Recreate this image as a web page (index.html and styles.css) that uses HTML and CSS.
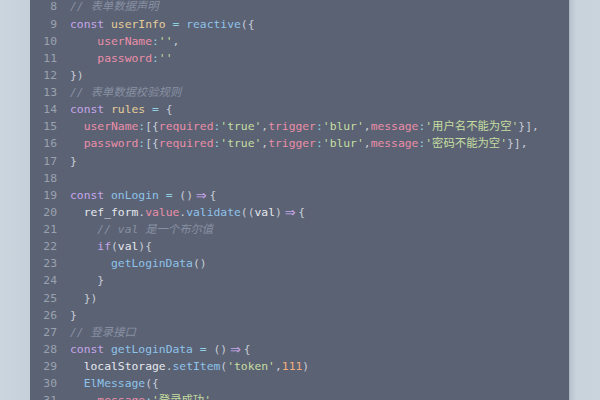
FILE: index.html
```html
<!DOCTYPE html>
<html lang="zh">
<head>
<meta charset="utf-8">
<link rel="stylesheet" href="styles.css">
</head>
<body>
<div class="panel">
  <div class="code">
    <div class="row"><span class="n">8</span><span class="c"><span class="cm">// 表单数据声明</span></span></div>
    <div class="row"><span class="n">9</span><span class="c"><span class="kw">const</span> <span class="var">userInfo</span> <span class="op">=</span> <span class="fn">reactive</span><span class="p">({</span></span></div>
    <div class="row"><span class="n">10</span><span class="c">    <span class="prop">userName</span><span class="op">:</span><span class="str">''</span><span class="p">,</span></span></div>
    <div class="row"><span class="n">11</span><span class="c">    <span class="prop">password</span><span class="op">:</span><span class="str">''</span></span></div>
    <div class="row"><span class="n">12</span><span class="c"><span class="p">})</span></span></div>
    <div class="row"><span class="n">13</span><span class="c"><span class="cm">// 表单数据校验规则</span></span></div>
    <div class="row"><span class="n">14</span><span class="c"><span class="kw">const</span> <span class="var">rules</span> <span class="op">=</span> <span class="p">{</span></span></div>
    <div class="row"><span class="n">15</span><span class="c">  <span class="prop">userName</span><span class="op">:</span><span class="p">[{</span><span class="prop">required</span><span class="op">:</span><span class="str">'true'</span><span class="p">,</span><span class="prop">trigger</span><span class="op">:</span><span class="str">'blur'</span><span class="p">,</span><span class="prop">message</span><span class="op">:</span><span class="str">'用户名不能为空'</span><span class="p">}],</span></span></div>
    <div class="row"><span class="n">16</span><span class="c">  <span class="prop">password</span><span class="op">:</span><span class="p">[{</span><span class="prop">required</span><span class="op">:</span><span class="str">'true'</span><span class="p">,</span><span class="prop">trigger</span><span class="op">:</span><span class="str">'blur'</span><span class="p">,</span><span class="prop">message</span><span class="op">:</span><span class="str">'密码不能为空'</span><span class="p">}],</span></span></div>
    <div class="row"><span class="n">17</span><span class="c"><span class="p">}</span></span></div>
    <div class="row"><span class="n">18</span><span class="c"></span></div>
    <div class="row"><span class="n">19</span><span class="c"><span class="kw">const</span> <span class="fn">onLogin</span> <span class="op">=</span> <span class="p">()</span><span class="arrow">⇒</span><span class="p">{</span></span></div>
    <div class="row"><span class="n">20</span><span class="c">  <span class="pl">ref_form</span><span class="p">.</span><span class="prop">value</span><span class="p">.</span><span class="fn">validate</span><span class="p">((</span><span class="pl">val</span><span class="p">)</span><span class="arrow">⇒</span><span class="p">{</span></span></div>
    <div class="row"><span class="n">21</span><span class="c">    <span class="cm">// val 是一个布尔值</span></span></div>
    <div class="row"><span class="n">22</span><span class="c">    <span class="kw">if</span><span class="p">(</span><span class="pl">val</span><span class="p">){</span></span></div>
    <div class="row"><span class="n">23</span><span class="c">      <span class="fn">getLoginData</span><span class="p">()</span></span></div>
    <div class="row"><span class="n">24</span><span class="c">    <span class="p">}</span></span></div>
    <div class="row"><span class="n">25</span><span class="c">  <span class="p">})</span></span></div>
    <div class="row"><span class="n">26</span><span class="c"><span class="p">}</span></span></div>
    <div class="row"><span class="n">27</span><span class="c"><span class="cm">// 登录接口</span></span></div>
    <div class="row"><span class="n">28</span><span class="c"><span class="kw">const</span> <span class="fn">getLoginData</span> <span class="op">=</span> <span class="p">()</span><span class="arrow">⇒</span><span class="p">{</span></span></div>
    <div class="row"><span class="n">29</span><span class="c">  <span class="pl">localStorage</span><span class="p">.</span><span class="fn">setItem</span><span class="p">(</span><span class="str">'token'</span><span class="p">,</span><span class="num">111</span><span class="p">)</span></span></div>
    <div class="row"><span class="n">30</span><span class="c">  <span class="fn">ElMessage</span><span class="p">({</span></span></div>
    <div class="row"><span class="n">31</span><span class="c">    <span class="prop">message</span><span class="op">:</span><span class="str">'登录成功'</span><span class="p">,</span></span></div>
  </div>
</div>
</body>
</html>
```
FILE: styles.css
```css
html, body {
  margin: 0;
  padding: 0;
  width: 600px;
  height: 400px;
  overflow: hidden;
}
body {
  background: linear-gradient(90deg, #cbd5de 0%, #c6d0da 5%, #c6d0da 94%, #b8c2cd 95%, #c7d2db 96%, #cad4dd 100%);
  display: flex;
}
.panel {
  margin-left: 30px;
  width: 539px;
  height: 400px;
  background: #5b6274;
  box-shadow: 1px 0 0 #a9b3bf, 2px 0 0 #bcc6d0;
  overflow: hidden;
}
.code {
  margin-top: -1.6px;
  font-family: "DejaVu Sans Mono", "Noto Sans CJK SC", monospace;
  font-size: 11.35px;
}
.row {
  display: grid;
  grid-template-columns: 27px 1fr;
  column-gap: 13px;
  height: 17.14px;
  line-height: 17.14px;
  white-space: pre;
}
.n {
  text-align: right;
  color: #9aa2b0;
}
.c { color: #e3e6ec; }
.cm { color: #8790a2; font-style: italic; }
.kw { color: #c7a6ec; }
.arrow {
  display: inline-block;
  width: 2ch;
  text-align: center;
  color: #c7a6ec;
  font-family: "DejaVu Sans", sans-serif;
  font-size: 13px;
  line-height: 17.14px;
  vertical-align: top;
}
.var { color: #e6cd98; }
.fn { color: #8ec2ea; }
.prop { color: #ea8ea8; }
.str { color: #c6dea0; }
.op { color: #8fd0e2; }
.p { color: #c8cdd6; }
.pl { color: #e6e8ee; }
.num { color: #f2ad7e; }
```
